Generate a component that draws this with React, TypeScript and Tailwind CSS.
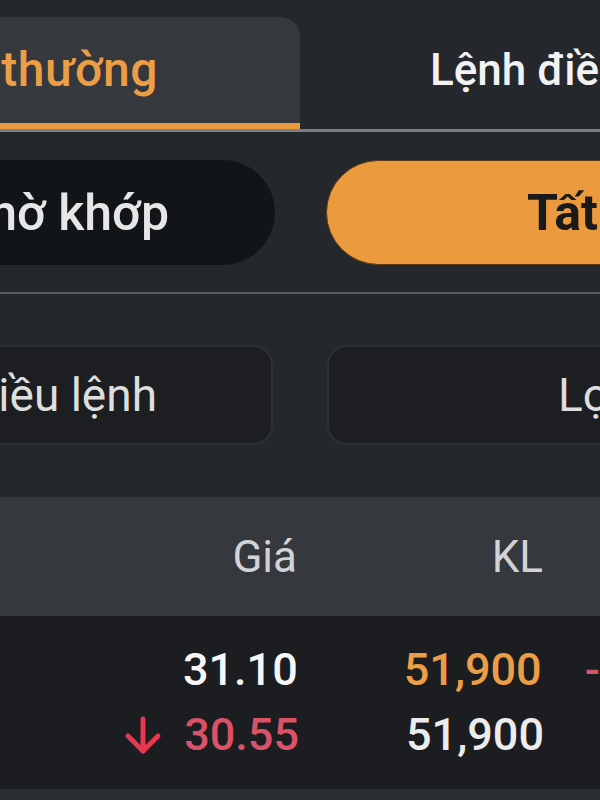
import React from "react";

function ArrowDownIcon() {
  return (
    <svg width="38" height="40" viewBox="0 0 38 40" fill="none" stroke="#e8374e" strokeWidth="5" strokeLinecap="round" strokeLinejoin="round">
      <path d="M19 4v32" />
      <path d="M4 21l15 15 15-15" />
    </svg>
  );
}

export default function App() {
  const font = { fontFamily: "Roboto, 'Noto Sans', sans-serif" };
  return (
    <div className="w-[600px] h-[800px] overflow-hidden bg-[#24272c] flex flex-col" style={font}>
      {/* Tabs */}
      <div className="pt-[17px] flex items-end">
        <div className="shrink-0 w-[300px] h-[112px] bg-[#35383d] rounded-tr-[20px] flex flex-col">
          <div className="flex-1 flex items-center justify-end pr-[142px] whitespace-nowrap">
            <span className="text-[48px] font-medium text-[#eb9e45] leading-none tracking-[0.5px]">Lệnh thường</span>
          </div>
          <div className="h-[6px] bg-[#eb9a3e]" />
        </div>
        <div className="shrink-0 w-[300px] h-[112px] flex items-center pl-[130px] pb-[6px] whitespace-nowrap">
          <span className="text-[44px] font-medium text-[#f2f2f2] leading-none">Lệnh điều kiện</span>
        </div>
      </div>
      <div className="h-[3px] bg-[#7b7e82]" />

      {/* Pills */}
      <div className="mt-[28px] flex gap-[51px] ml-[-125px]">
        <div className="shrink-0 w-[400px] h-[105px] rounded-full bg-[#121518] flex items-center justify-end pr-[106px] whitespace-nowrap">
          <span className="text-[50px] font-medium text-[#e6e6e6] leading-none">Chờ khớp</span>
        </div>
        <div className="shrink-0 w-[400px] h-[105px] rounded-full bg-[#eb9a3e] border border-[#5a3a14] flex items-center pl-[200px] whitespace-nowrap">
          <span className="text-[50px] font-bold text-[#1a1a1a] leading-none">Tất cả</span>
        </div>
      </div>

      <div className="mt-[27px] h-[2px] bg-[#5a5d61]" />

      {/* Filter boxes */}
      <div className="mt-[51px] flex gap-[54px] ml-[-127px]">
        <div className="shrink-0 w-[400px] h-[100px] rounded-[20px] bg-[#1c1e22] border-2 border-[#2d3034] flex items-center justify-end pr-[114px] whitespace-nowrap">
          <span className="text-[46px] text-[#dedede] leading-none">Kiều lệnh</span>
        </div>
        <div className="shrink-0 w-[400px] h-[100px] rounded-[20px] bg-[#1c1e22] border-2 border-[#2d3034] flex items-center pl-[229px] whitespace-nowrap">
          <span className="text-[46px] text-[#dedede] leading-none">Lọc</span>
        </div>
      </div>

      {/* Table header */}
      <div className="mt-[52px] h-[119px] bg-[#35383d] flex items-center">
        <div className="w-[297px] text-right text-[44px] text-[#d2d3d5] leading-none">Giá</div>
        <div className="w-[246px] text-right text-[44px] text-[#d2d3d5] leading-none">KL</div>
      </div>

      {/* Rows */}
      <div className="h-[173px] bg-[#1b1d20] pt-[21px] flex flex-col">
        <div className="h-[65px] flex items-center">
          <div className="w-[299px] flex justify-end text-[45px] font-medium text-[#f7f7f7] leading-none">31.10</div>
          <div className="w-[245px] text-right text-[45px] font-medium text-[#eb9e45] leading-none">51,900</div>
          <div className="ml-[43px] text-[45px] font-medium text-[#d4566b] leading-none">-</div>
        </div>
        <div className="h-[65px] flex items-center">
          <div className="w-[299px] flex items-center justify-end gap-[22px]">
            <ArrowDownIcon />
            <span className="text-[45px] font-medium text-[#da5267] leading-none">30.55</span>
          </div>
          <div className="w-[245px] text-right text-[45px] font-medium text-[#ececec] leading-none">51,900</div>
        </div>
      </div>
      <div className="flex-1 bg-[#2a2d31]" />
    </div>
  );
}
